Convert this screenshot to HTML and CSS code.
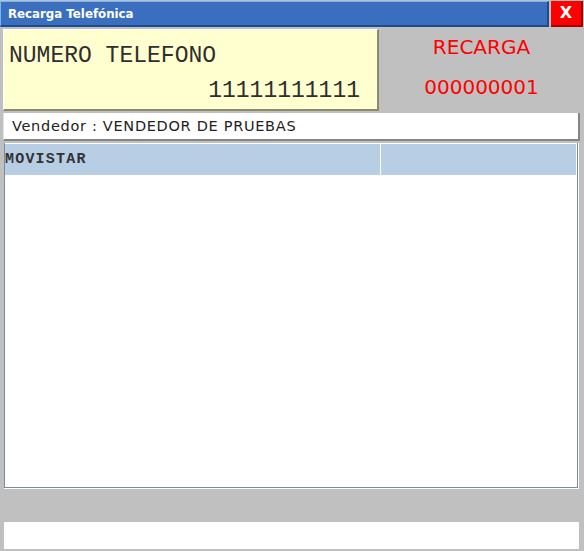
FILE: index.html
```html
<!DOCTYPE html>
<html lang="es">
<head>
<meta charset="utf-8">
<title>Recarga Telefónica</title>
<link rel="stylesheet" href="styles.css">
</head>
<body>
<div class="window">
  <div class="title-row">
    <div class="titlebar">Recarga Telefónica</div>
    <div class="close">X</div>
  </div>
  <div class="info-row">
    <div class="phone">
      <div class="phone-label">NUMERO TELEFONO</div>
      <div class="phone-number">11111111111</div>
    </div>
    <div class="recarga">
      <div class="recarga-label">RECARGA</div>
      <div class="recarga-num">000000001</div>
    </div>
  </div>
  <div class="vendor">Vendedor : VENDEDOR DE PRUEBAS</div>
  <div class="grid-wrap">
    <div class="grid">
      <div class="grid-header">
        <div class="cell">MOVISTAR</div>
        <div class="cell"></div>
      </div>
    </div>
  </div>
  <div class="status"></div>
</div>
</body>
</html>
```

FILE: styles.css
```css
html, body {
  margin: 0;
  padding: 0;
}
body {
  background: #c0c0c0;
  font-family: "DejaVu Sans", Verdana, sans-serif;
  width: 584px;
  height: 551px;
  overflow: hidden;
}
.window {
  display: flex;
  flex-direction: column;
}
.title-row {
  display: flex;
  gap: 2px;
  margin-top: 1px;
  height: 26px;
}
.titlebar {
  box-sizing: border-box;
  width: 549px;
  height: 26px;
  background: #3a6fc0;
  border-top: 1px solid #7ab4f2;
  border-left: 1px solid #7ab4f2;
  border-right: 2px solid #1e4b8b;
  border-bottom: 2px solid #1e4b8b;
  color: #fff;
  font-weight: bold;
  font-size: 11.8px;
  line-height: 22px;
  padding-top: 1px;
  padding-left: 7px;
}
.close {
  box-sizing: border-box;
  width: 32px;
  height: 26px;
  background: #ff0000;
  border-right: 2px solid #a80000;
  border-bottom: 2px solid #a80000;
  color: #fff;
  font-weight: bold;
  font-size: 16px;
  line-height: 24px;
  text-align: center;
}
.info-row {
  display: flex;
  margin-top: 2px;
  height: 82px;
}
.phone {
  box-sizing: border-box;
  margin-left: 3px;
  width: 376px;
  height: 82px;
  background: #ffffd0;
  border-top: 1px solid #ffffff;
  border-left: 1px solid #ffffff;
  border-right: 2px solid #8a8a6e;
  border-bottom: 2px solid #8a8a6e;
  padding: 13px 17px 0 5px;
  font-family: "Liberation Mono", "Courier New", monospace;
  font-size: 23px;
  line-height: 26px;
  color: #2e2e2e;
}
.phone-number {
  margin-top: 9px;
  text-align: right;
}
.recarga {
  flex: 1;
  text-align: center;
  color: #ff0000;
  font-size: 20px;
  line-height: 36px;
}
.recarga-num {
  margin-top: 4px;
}
.vendor {
  box-sizing: border-box;
  margin: 2px 0 0 3px;
  width: 577px;
  height: 28px;
  background: #fff;
  border-left: 1px solid #e4e4e4;
  border-right: 2px solid #858585;
  border-bottom: 2px solid #858585;
  padding-left: 8px;
  font-size: 14.5px;
  letter-spacing: 0.7px;
  line-height: 26px;
  color: #222;
}
.grid-wrap {
  box-sizing: border-box;
  margin: 2px 0 0 4px;
  width: 575px;
  height: 346px;
  border-right: 1px solid #fff;
  border-bottom: 1px solid #fff;
}
.grid {
  box-sizing: border-box;
  height: 345px;
  background: #fff;
  border-left: 1px solid #7b8c9c;
  border-right: 1px solid #7b8c9c;
  border-bottom: 1px solid #7b8c9c;
  padding-top: 1px;
}
.grid-header {
  display: grid;
  grid-template-columns: 375px 195px;
  column-gap: 1px;
  padding-right: 1px;
  height: 31px;
}
.cell {
  background: #b8cee4;
  font-family: "Liberation Mono", "Courier New", monospace;
  font-weight: bold;
  font-size: 15px;
  letter-spacing: 1.2px;
  line-height: 31px;
  color: #333;
  white-space: nowrap;
}
.status {
  margin: 33px 0 0 4px;
  width: 575px;
  height: 27px;
  background: #fff;
}
```
